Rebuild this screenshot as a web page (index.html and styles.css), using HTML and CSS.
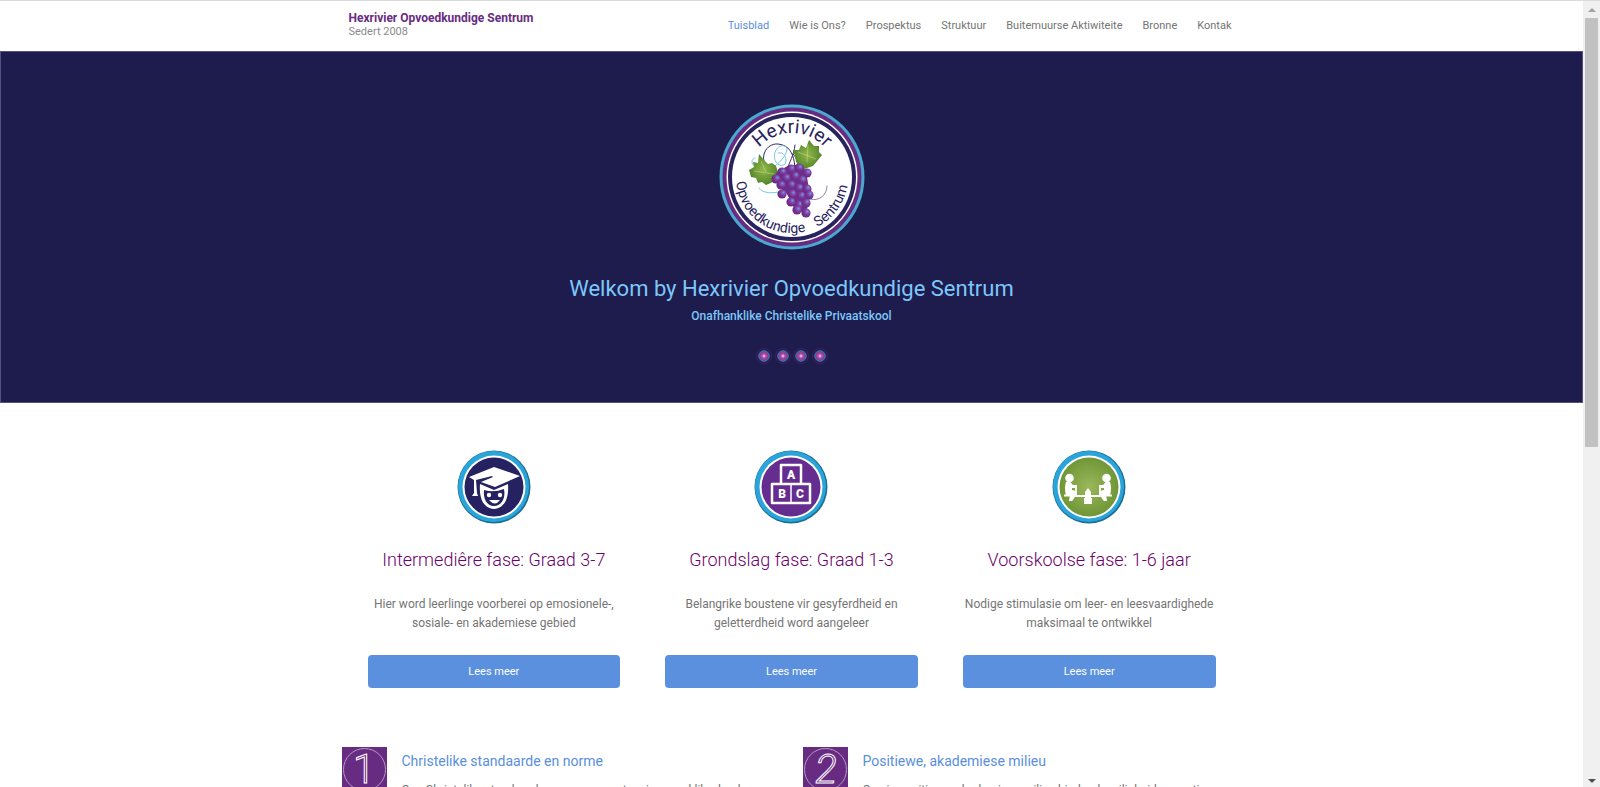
FILE: index.html
```html
<!DOCTYPE html>
<html lang="af">
<head>
  <meta charset="UTF-8">
  <meta name="viewport" content="width=device-width, initial-scale=1.0">
  <title>Hexrivier Opvoedkundige Sentrum</title>
  <link rel="stylesheet" href="styles.css">
</head>
<body>

<div class="page">
  <header class="site-header">
    <div class="container header-inner">
      <div class="brand">
        <a class="brand-name" href="#">Hexrivier Opvoedkundige Sentrum</a>
        <span class="brand-slogan">Sedert 2008</span>
      </div>
      <nav class="main-nav">
        <a class="active" href="#">Tuisblad</a>
        <a href="#">Wie is Ons?</a>
        <a href="#">Prospektus</a>
        <a href="#">Struktuur</a>
        <a href="#">Buitemuurse Aktiwiteite</a>
        <a href="#">Bronne</a>
        <a href="#">Kontak</a>
      </nav>
    </div>
  </header>

  <section class="hero">
    <svg class="logo" viewBox="0 0 146 146" role="img" aria-label="Hexrivier Opvoedkundige Sentrum">
      <defs>
        <path id="arc-top" d="M29 73A44 44 0 0 1 117 73"/>
        <path id="arc-bottom" d="M17 73A56 56 0 0 0 129 73"/>
        <radialGradient id="leaf"><stop offset="0" stop-color="#91b94a"/><stop offset="1" stop-color="#55852b"/></radialGradient>
        <radialGradient id="grape" cx=".65" cy=".35"><stop offset="0" stop-color="#5aa8e6"/><stop offset=".45" stop-color="#8a45a8"/><stop offset="1" stop-color="#6b2c8a"/></radialGradient>
        <g id="berry"><circle r="4.600" fill="url(#grape)"/></g>
      </defs>
      <circle cx="73" cy="73" r="72.500" fill="#4aa9cf"/>
      <circle cx="73" cy="73" r="69.500" fill="#672c82"/>
      <circle cx="73" cy="73" r="65.500" fill="#fff"/>
      <circle cx="73" cy="73" r="64" fill="#28235d"/>
      <circle cx="73" cy="73" r="60" fill="#fff"/>
      <g fill="none" stroke-linecap="round">
        <path d="M49 65C39 54 47 39 59 40C70 41 75 49 76 64M68 66C70 58 75 52 76 41M74 50C79 55 78 60 80 64" stroke="#312b65" stroke-width="1"/>
        <path d="M36 54C30 56 33 63 42 65C54 67 63 57 67 49C71 41 61 39 57 46C52 56 60 65 66 60C69 55 65 47 59 49M40 84C44 90 54 89 60 88" stroke="#7ac7e5" stroke-width="1"/>
        <path d="M91 95C101 98 108 90 108 82" stroke="#77609a" stroke-width=".8"/>
      </g>
      <path d="M30 66l5-3-1-5 5 1 1-9 5 6 4 4 4-1 4 3 2 6-2 5-3 5-7 3-4-3-4 1-2-5-5-1z" fill="url(#leaf)"/>
      <path d="M74 46l6 0 2-5 5 3 3-8 5 6 5 0 0 6 3 3-4 5-5 6-9 3-3-3-5-4-1-6z" fill="url(#leaf)"/>
      <path d="M35 67l20 3M42 57l5 11M79 48l18 7M89 41l-1 17" stroke="#c4da86" stroke-width=".6" fill="none"/>
      <path d="M57 69L70 61L84 61L88 73L91 92L87 110L75 104L69 91L59 82z" fill="#693086"/>
      <use href="#berry" x="57" y="75"/><use href="#berry" x="63" y="68"/><use href="#berry" x="72" y="65"/><use href="#berry" x="80" y="64"/><use href="#berry" x="88" y="69"/>
      <use href="#berry" x="67" y="74"/><use href="#berry" x="76" y="72"/><use href="#berry" x="83" y="76"/><use href="#berry" x="62" y="81"/><use href="#berry" x="72" y="81"/>
      <use href="#berry" x="80" y="84"/><use href="#berry" x="88" y="85"/><use href="#berry" x="63" y="90"/><use href="#berry" x="73" y="90"/><use href="#berry" x="82" y="92"/>
      <use href="#berry" x="90" y="91"/><use href="#berry" x="72" y="98"/><use href="#berry" x="80" y="101"/><use href="#berry" x="87" y="99"/><use href="#berry" x="78" y="106"/><use href="#berry" x="87" y="109"/>
      <text class="logo-top"><textPath href="#arc-top" startOffset="50%">Hexrivier</textPath></text>
      <text class="logo-bottom"><textPath href="#arc-bottom" startOffset="5">Opvoedkundige</textPath></text>
      <text class="logo-bottom"><textPath href="#arc-bottom" startOffset="114">Sentrum</textPath></text>
    </svg>
    <h1>Welkom by Hexrivier Opvoedkundige Sentrum</h1>
    <p class="tagline">Onafhanklike Christelike Privaatskool</p>
    <svg class="dots" viewBox="0 0 73 18" aria-hidden="true">
      <defs>
        <radialGradient id="dot"><stop offset="0" stop-color="#f0dff0"/><stop offset=".4" stop-color="#a64aa0"/><stop offset="1" stop-color="#71398f"/></radialGradient>
        <g id="bead"><circle r="7.500" fill="none" stroke="#44205e"/><circle r="5.300" fill="url(#dot)" stroke="#2d83b5"/></g>
      </defs>
      <use href="#bead" x="9" y="9"/><use href="#bead" x="28" y="9"/><use href="#bead" x="46" y="9"/><use href="#bead" x="65" y="9"/>
    </svg>
  </section>

  <main>
    <section class="container phases">
      <article class="phase">
        <svg class="phase-icon" viewBox="0 0 74 74" aria-hidden="true">
          <circle cx="37" cy="37" r="36.500" fill="#1c6f93"/>
          <circle cx="36.500" cy="36.500" r="35.500" fill="#29a5dc"/>
          <circle cx="37" cy="37" r="31.500" fill="#fff"/>
          <circle cx="37" cy="37" r="29.500" fill="#262262"/>
          <path d="M12 27L37 17L63 26L38 37L24 32L36 27L35 26L19 30L20 43L21 46H15L17 43V30z" fill="#fff"/>
          <path d="M23 34L37 40L51 34C52 48 48 58 37 59C26 58 22 48 23 34z" fill="#fff"/>
          <path d="M27 40Q37 43 47 39C49 49 44 56 37 56C30 56 26 49 27 40z" fill="#262262"/>
          <circle cx="32" cy="45" r="2.200" fill="#fff"/><circle cx="43" cy="45" r="2.200" fill="#fff"/>
          <path d="M32 50H43Q38 57 32 50z" fill="#fff"/>
        </svg>
        <h2>Intermediêre fase: Graad 3-7</h2>
        <p>Hier word leerlinge voorberei op emosionele-, sosiale- en akademiese gebied</p>
        <a class="btn" href="#">Lees meer</a>
      </article>

      <article class="phase">
        <svg class="phase-icon" viewBox="0 0 74 74" aria-hidden="true">
          <circle cx="37" cy="37" r="36.500" fill="#1c6f93"/>
          <circle cx="36.500" cy="36.500" r="35.500" fill="#29a5dc"/>
          <circle cx="37" cy="37" r="31.500" fill="#fff"/>
          <circle cx="37" cy="37" r="29.500" fill="#662d91"/>
          <path d="M27 34V15H47V34M18 34H56V53H18z" fill="none" stroke="#fff" stroke-width="2.500" stroke-linejoin="round"/>
          <path d="M37 34V53" stroke="#fff" stroke-width="1.500"/>
          <g class="block-letters"><text x="37" y="29">A</text><text x="28" y="48">B</text><text x="46" y="48">C</text></g>
        </svg>
        <h2>Grondslag fase: Graad 1-3</h2>
        <p>Belangrike boustene vir gesyferdheid en geletterdheid word aangeleer</p>
        <a class="btn" href="#">Lees meer</a>
      </article>

      <article class="phase">
        <svg class="phase-icon" viewBox="0 0 74 74" aria-hidden="true">
          <defs>
            <radialGradient id="green"><stop offset="0" stop-color="#9bb85a"/><stop offset="1" stop-color="#6f9638"/></radialGradient>
            <g id="child">
              <circle cx="17.500" cy="28" r="4.300" fill="#fff"/>
              <path d="M14 32Q18 30 20 34L21 35H25V38H20L20 40L24 41V45L21 50L20 51H17L18 45L14 45Q12 38 14 32z" fill="#fff"/>
              <path d="M12 45.500H18M24 38V46H35" stroke="#fff" stroke-width="1.800" fill="none"/>
            </g>
          </defs>
          <circle cx="37" cy="37" r="36.500" fill="#1c6f93"/>
          <circle cx="36.500" cy="36.500" r="35.500" fill="#29a5dc"/>
          <circle cx="37" cy="37" r="31.500" fill="#fff"/>
          <circle cx="37" cy="37" r="29.500" fill="url(#green)"/>
          <use href="#child"/>
          <use href="#child" transform="translate(72 0) scale(-1 1)"/>
          <path d="M32 54V48H33V42L36 38L39 42V48H40V54z" fill="#fff"/>
        </svg>
        <h2>Voorskoolse fase: 1-6 jaar</h2>
        <p>Nodige stimulasie om leer- en leesvaardighede maksimaal te ontwikkel</p>
        <a class="btn" href="#">Lees meer</a>
      </article>
    </section>

    <section class="container values">
      <article class="value">
        <svg class="value-icon" viewBox="0 0 45 45" aria-hidden="true">
          <rect width="45" height="45" fill="#672c82"/>
          <circle cx="22.500" cy="22.500" r="21" class="thin-ring"/>
          <text class="numeral" x="22" y="36">1</text>
        </svg>
        <div>
          <h3>Christelike standaarde en norme</h3>
          <p>Ons Christelike standaarde waarmee ons toesien maaklike, leerbare dissipline</p>
        </div>
      </article>
      <article class="value">
        <svg class="value-icon" viewBox="0 0 45 45" aria-hidden="true">
          <rect width="45" height="45" fill="#672c82"/>
          <circle cx="22.500" cy="22.500" r="21" class="thin-ring"/>
          <text class="numeral slanted" x="23" y="36">2</text>
        </svg>
        <div>
          <h3>Positiewe, akademiese milieu</h3>
          <p>Ons is positiewe, akademiese milieu bied ook veiligheid en rustige</p>
        </div>
      </article>
    </section>
  </main>
</div>

<div class="scrollbar" aria-hidden="true">
  <span class="arrow-up"></span>
  <span class="thumb"></span>
  <span class="arrow-down"></span>
</div>

</body>
</html>
```
FILE: styles.css
```css
* {
  box-sizing: border-box;
}

body {
  display: flex;
  height: 100vh;
  margin: 0;
  overflow: hidden;
  border-top: 1px solid #dadada;
  background: #fff;
  color: #757575;
  font-family: Roboto, sans-serif;
  font-size: 12px;
}

h1, h2, h3, p {
  margin: 0;
  font-weight: 400;
}

a {
  color: inherit;
  text-decoration: none;
}

.page {
  flex: 1;
  overflow: hidden;
}

.container {
  max-width: 900px;
  margin: 0 auto;
}

/* header */
.header-inner {
  display: flex;
  justify-content: space-between;
  align-items: center;
  height: 50px;
  padding: 0 10px 2px 7px;
}

.brand {
  display: flex;
  flex-direction: column;
  padding-bottom: 2px;
}

.brand-name {
  color: #672c82;
  font-size: 12px;
  font-weight: 700;
  line-height: 16px;
}

.brand-slogan {
  color: #8a8a8a;
  font-size: 11px;
  line-height: 12px;
}

.main-nav {
  display: flex;
  gap: 20px;
  font-size: 11px;
}

.main-nav .active {
  color: #5a8fdd;
}

/* hero */
.hero {
  display: flex;
  flex-direction: column;
  align-items: center;
  height: 352px;
  padding-top: 52px;
  border: 1px solid #55517c;
  background: #1e1b4d;
  color: #7cc8fa;
}

.logo {
  width: 146px;
  height: 146px;
}

.logo text {
  fill: #28235d;
}

.logo-top {
  font-size: 19px;
  text-anchor: middle;
}

.logo-bottom {
  font-size: 14px;
}

.hero h1 {
  margin-top: 23px;
  font-size: 22px;
  line-height: 32px;
}

.tagline {
  font-size: 12px;
  font-weight: 500;
  line-height: 22px;
}

.dots {
  width: 73px;
  height: 18px;
  margin-top: 20px;
}

/* phases */
.phases {
  display: grid;
  grid-template-columns: repeat(3, 1fr);
  gap: 45px;
  padding: 47px 26px 0;
}

.phase {
  display: flex;
  flex-direction: column;
  align-items: center;
  text-align: center;
}

.phase-icon {
  width: 74px;
  height: 74px;
}

.block-letters {
  fill: #fff;
  font-size: 12px;
  font-weight: 900;
  text-anchor: middle;
}

.phase h2 {
  margin-top: 23px;
  color: #6c006c;
  font-size: 18px;
  font-weight: 300;
  line-height: 26px;
}

.phase p {
  margin-top: 22px;
  font-size: 12px;
  line-height: 19px;
}

.btn {
  align-self: stretch;
  margin-top: 22px;
  border-radius: 4px;
  background: #5a90dd;
  color: #fff;
  font-size: 11px;
  line-height: 33px;
}

/* values */
.values {
  display: grid;
  grid-template-columns: 1fr 1fr;
  gap: 22px;
  padding-top: 59px;
}

.value {
  display: flex;
  gap: 15px;
}

.value-icon {
  flex: none;
  width: 45px;
  height: 45px;
}

.thin-ring {
  fill: none;
  stroke: #b596c2;
  stroke-width: 1;
}

.numeral {
  fill: #672c82;
  stroke: #fff;
  stroke-width: 1;
  font-size: 40px;
  font-weight: 300;
  text-anchor: middle;
}

.slanted {
  font-style: italic;
}

.value h3 {
  color: #5a8fdd;
  font-size: 14px;
  line-height: 28px;
}

.value p {
  margin-top: 6px;
  font-size: 12px;
  line-height: 19px;
}

/* scrollbar */
.scrollbar {
  display: flex;
  flex-direction: column;
  align-items: center;
  width: 17px;
  padding: 7px 0 4px;
  background: #f0f0f0;
}

.arrow-up, .arrow-down {
  border: 4px solid transparent;
}

.arrow-up {
  border-top: 0;
  border-bottom-color: #a0a0a0;
}

.arrow-down {
  margin-top: auto;
  border-bottom: 0;
  border-top-color: #505050;
}

.thumb {
  width: 13px;
  height: 55.4%;
  margin-top: 6px;
  background: #c1c1c1;
}
```
